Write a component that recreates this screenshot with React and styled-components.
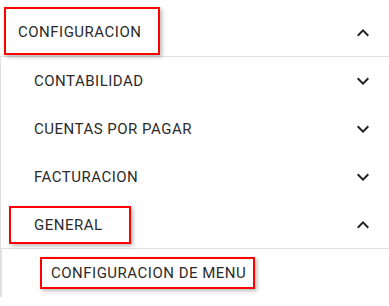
import React from 'react';
import styled, { createGlobalStyle } from 'styled-components';

const GlobalStyle = createGlobalStyle`
  html, body {
    margin: 0;
    padding: 0;
    background: #ffffff;
  }
  body {
    font-family: Roboto, "Liberation Sans", Arial, sans-serif;
  }
`;

const Menu = styled.nav`
  width: 389px;
  height: 306px;
  overflow: hidden;
  background: #fff;
`;

const Row = styled.div`
  display: flex;
  align-items: ${({ top }) => (top ? 'flex-start' : 'center')};
  justify-content: space-between;
  height: ${({ h }) => h || 48}px;
  padding: ${({ top }) => top || 0}px 14px 0 ${({ indent }) => indent}px;
  box-sizing: border-box;
  border-bottom: ${({ divider }) => (divider ? '1px solid #e0e0e0' : 'none')};
`;

const SubList = styled.div`
  border-left: 1px solid #e0e0e0;
`;

const Label = styled.span`
  display: inline-block;
  font-size: 15px;
  line-height: 20px;
  text-transform: uppercase;
  color: #2b2b2b;
  letter-spacing: 0.5px;
  white-space: nowrap;
`;

const Marked = styled(Label)`
  border: 2px solid #ff0000;
  box-shadow: 2px 2px 4px rgba(0, 0, 0, 0.28);
  padding: ${({ pad }) => pad};
`;

const IconSlot = styled.span`
  display: flex;
  margin-top: ${({ shift }) => shift || 0}px;
`;

const Chevron = ({ up }) => (
  <svg width="24" height="24" viewBox="0 0 24 24" aria-hidden="true">
    <path
      d={up ? 'M7.41 15.41L12 10.83l4.59 4.58L18 14l-6-6-6 6z' : 'M16.59 8.59L12 13.17 7.41 8.59 6 10l6 6 6-6z'}
      fill="rgba(0,0,0,0.87)"
    />
  </svg>
);

export default function App() {
  return (
    <>
      <GlobalStyle />
      <Menu>
        <Row h={57} top={7} indent={4} divider>
          <Marked pad="13px 17px 11px 12px">Configuracion</Marked>
          <IconSlot shift={14}><Chevron up /></IconSlot>
        </Row>
        <SubList>
          <Row indent={33}>
            <Label>Contabilidad</Label>
            <IconSlot><Chevron /></IconSlot>
          </Row>
          <Row indent={33}>
            <Label>Cuentas por pagar</Label>
            <IconSlot><Chevron /></IconSlot>
          </Row>
          <Row indent={33}>
            <Label>Facturacion</Label>
            <IconSlot><Chevron /></IconSlot>
          </Row>
          <Row indent={8} divider>
            <Marked pad="7px 26px 7px 23px">General</Marked>
            <IconSlot><Chevron up /></IconSlot>
          </Row>
          <SubList>
            <Row indent={38}>
              <Marked pad="4px 7px 4px 9px">Configuracion de menu</Marked>
            </Row>
          </SubList>
        </SubList>
      </Menu>
    </>
  );
}
